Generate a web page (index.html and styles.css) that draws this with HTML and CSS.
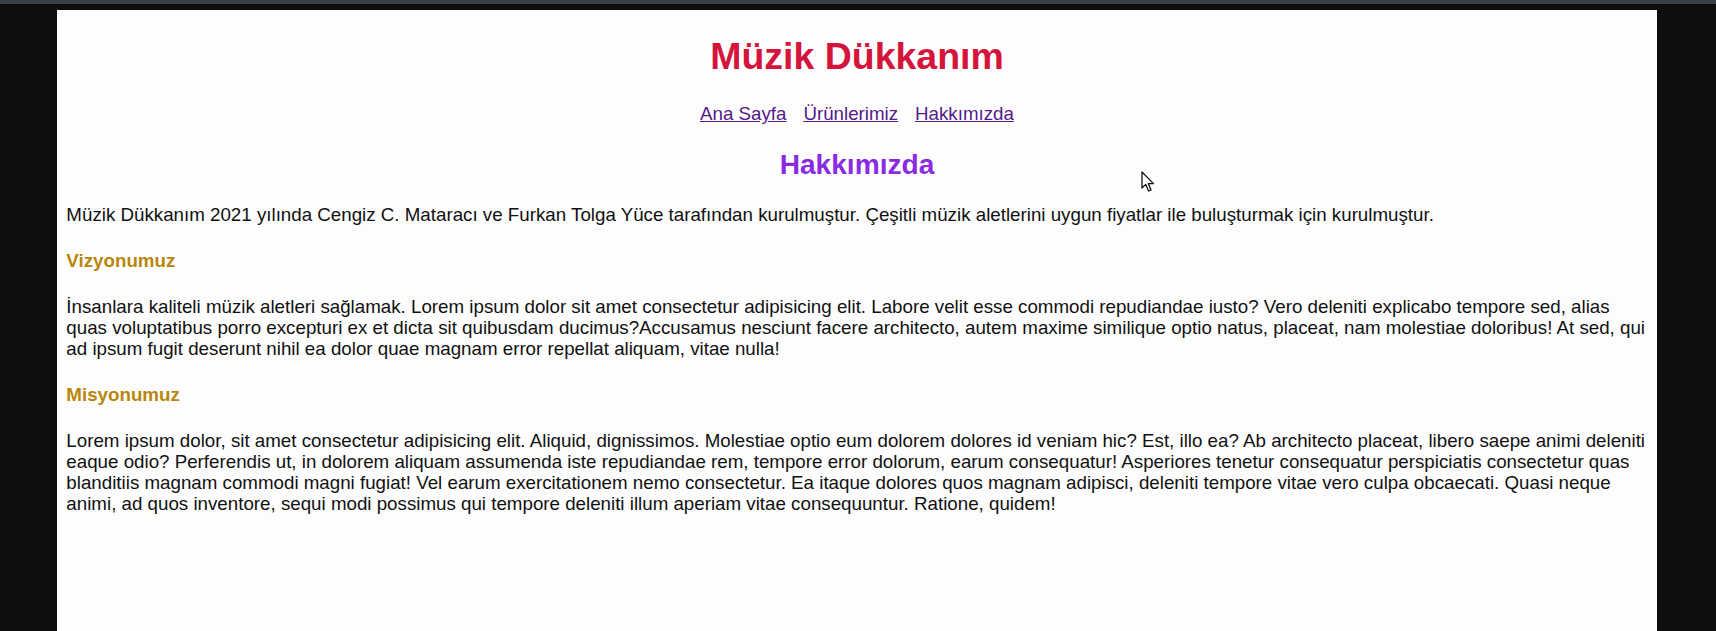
FILE: index.html
```html
<!DOCTYPE html>
<html lang="tr">
<head>
<meta charset="utf-8">
<title>Müzik Dükkanım</title>
<link rel="stylesheet" href="styles.css">
</head>
<body>
<div class="topbar"></div>
<div class="stage">
  <div class="panel">
    <div class="site">
      <h1 class="brand">Müzik Dükkanım</h1>
      <nav class="nav">
        <a href="#" class="nav-link">Ana Sayfa</a>
        <a href="#" class="nav-link">Ürünlerimiz</a>
        <a href="#" class="nav-link">Hakkımızda</a>
      </nav>
      <h2 class="page-title">Hakkımızda</h2>
      <p class="text">Müzik Dükkanım 2021 yılında Cengiz C. Mataracı ve Furkan Tolga Yüce tarafından kurulmuştur. Çeşitli müzik aletlerini uygun fiyatlar ile buluşturmak için kurulmuştur.</p>
      <h4 class="section-title">Vizyonumuz</h4>
      <p class="text">İnsanlara kaliteli müzik aletleri sağlamak. Lorem ipsum dolor sit amet consectetur adipisicing elit. Labore velit esse commodi repudiandae iusto? Vero deleniti explicabo tempore sed, alias quas voluptatibus porro excepturi ex et dicta sit quibusdam ducimus?Accusamus nesciunt facere architecto, autem maxime similique optio natus, placeat, nam molestiae doloribus! At sed, qui ad ipsum fugit deserunt nihil ea dolor quae magnam error repellat aliquam, vitae nulla!</p>
      <h4 class="section-title">Misyonumuz</h4>
      <p class="text">Lorem ipsum dolor, sit amet consectetur adipisicing elit. Aliquid, dignissimos. Molestiae optio eum dolorem dolores id veniam hic? Est, illo ea? Ab architecto placeat, libero saepe animi deleniti eaque odio? Perferendis ut, in dolorem aliquam assumenda iste repudiandae rem, tempore error dolorum, earum consequatur! Asperiores tenetur consequatur perspiciatis consectetur quas blanditiis magnam commodi magni fugiat! Vel earum exercitationem nemo consectetur. Ea itaque dolores quos magnam adipisci, deleniti tempore vitae vero culpa obcaecati. Quasi neque animi, ad quos inventore, sequi modi possimus qui tempore deleniti illum aperiam vitae consequuntur. Ratione, quidem!</p>
    </div>
    <svg class="cursor" width="14" height="22" viewBox="0 0 14 22" aria-hidden="true">
      <path d="M1 1 L1 17 L4.8 13.4 L7.6 20 L10 19 L7.3 12.6 L12.5 12.6 Z" fill="#ffffff" stroke="#111111" stroke-width="1.3" stroke-linejoin="round"/>
    </svg>
  </div>
</div>
</body>
</html>
```
FILE: styles.css
```css
html, body {
  margin: 0;
  padding: 0;
  background: #0e0e0e;
  height: 100%;
  overflow: hidden;
}

.topbar {
  height: 4px;
  background: #394347;
}

.stage {
  padding: 6px 59px 0 57px;
}

.panel {
  position: relative;
  width: 1600px;
  height: 621px;
  background: #fdfdfd;
  overflow: hidden;
}

.site {
  width: 1366px;
  box-sizing: border-box;
  padding: 0 8px;
  zoom: 1.1713;
  font-family: "Liberation Sans", Arial, sans-serif;
  font-size: 16px;
  color: #111111;
}

.brand {
  margin: 21.44px 0;
  font-size: 32px;
  font-weight: bold;
  text-align: center;
  color: #d5143c;
}

.nav {
  text-align: center;
}

.nav-link {
  color: #551a8b;
  margin: 0 5px;
}

.page-title {
  margin: 19.92px 0;
  font-size: 24px;
  text-align: center;
  color: #8a2be2;
}

.text {
  margin: 16px 0;
  line-height: 18px;
}

.section-title {
  margin: 21.28px 0;
  font-size: 16px;
  line-height: 18px;
  color: #b8860b;
}

.cursor {
  position: absolute;
  left: 1084px;
  top: 161px;
}
```
